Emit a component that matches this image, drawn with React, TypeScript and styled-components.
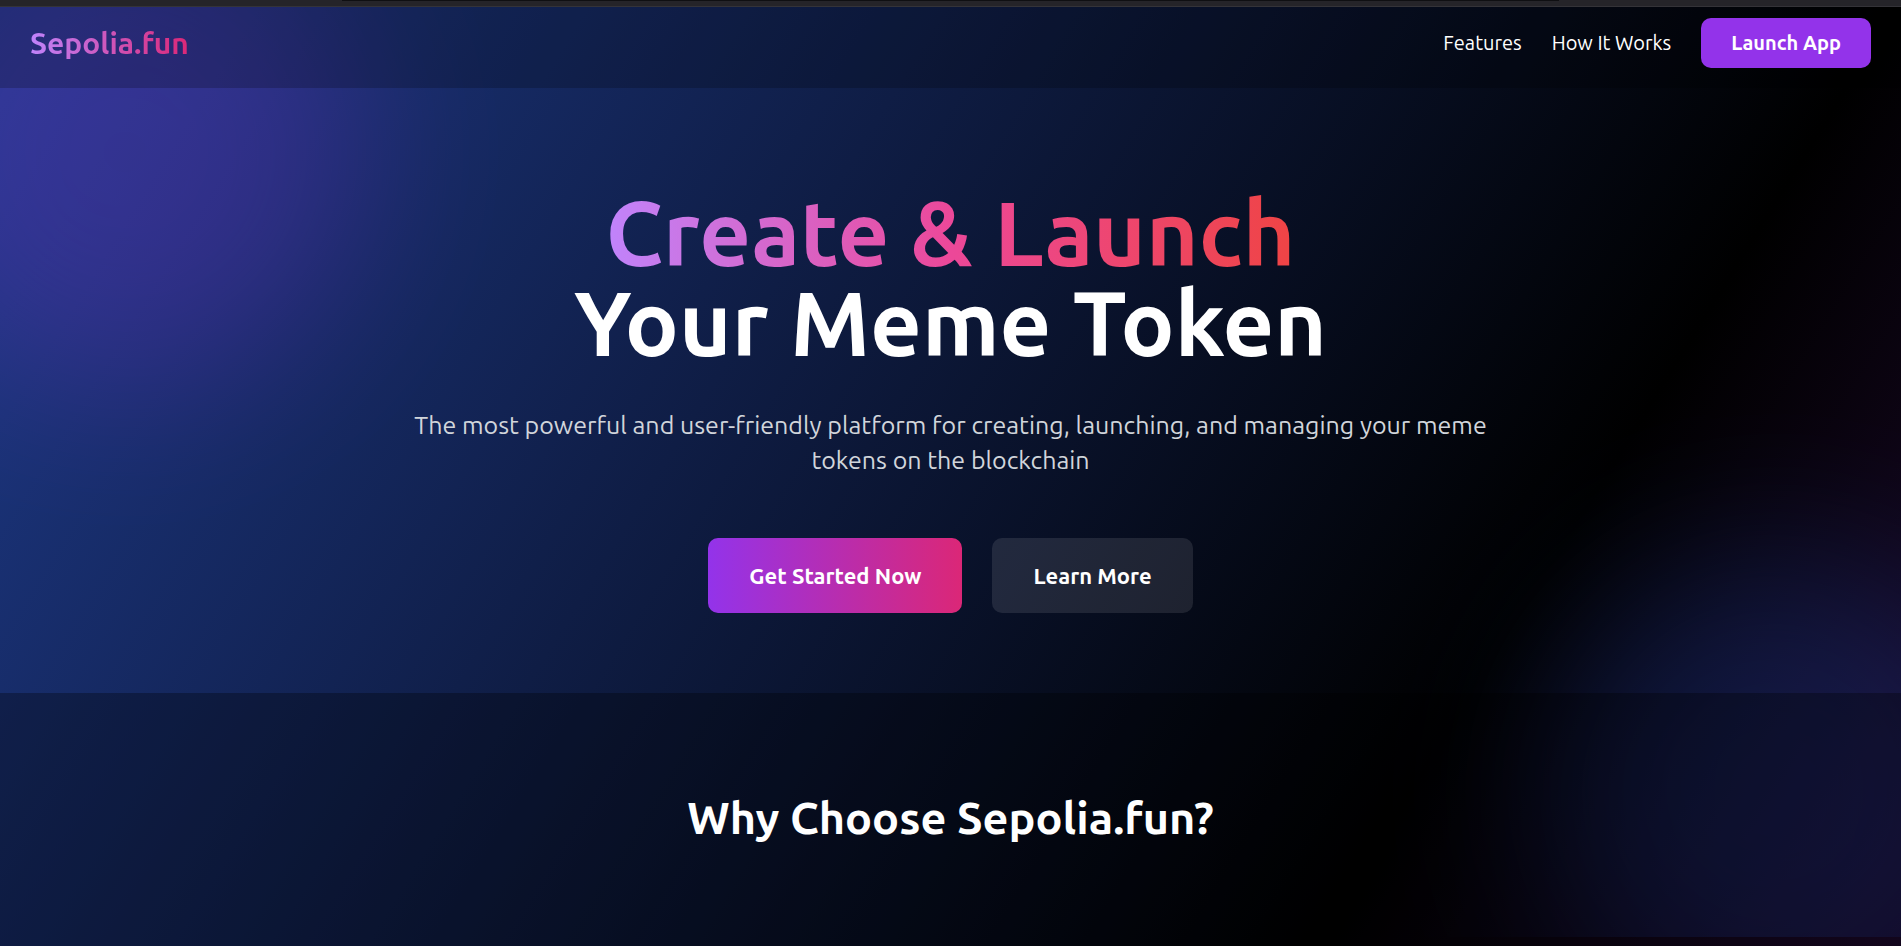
import React from "react";
import styled, { createGlobalStyle, css } from "styled-components";

const GlobalStyle = createGlobalStyle`
  *, *::before, *::after { box-sizing: border-box; }
  body { margin: 0; background: #000; }
`;

const Page = styled.div`
  position: relative;
  min-height: 100vh;
  display: flex;
  flex-direction: column;
  overflow: hidden;
  background: linear-gradient(to bottom right, #1e3a8a, #000 50%, #581c87) 0 0 / 100% 3070px no-repeat;
  color: #fff;
  font-family: Ubuntu, "Noto Sans", sans-serif;
  font-size: 20px;
  font-weight: 400;
  line-height: 30px;
`;

const WindowEdge = styled.div`
  position: relative;
  height: 7px;
  background: #252429;
  border-bottom: 1px solid #343338;
`;

const AddressBarEdge = styled.div`
  width: 64%;
  height: 1px;
  margin: 0 auto;
  background: #0f0f12;
`;

const Glow = styled.div`
  position: absolute;
  inset: 7px 0 9px;
  overflow: hidden;
  pointer-events: none;
`;

const Orb = styled.div<{ $tone: "purple" | "blue" }>`
  position: absolute;
  width: 480px;
  height: 480px;
  border-radius: 50%;
  filter: blur(80px);
  opacity: 0.2;
  ${({ $tone }) =>
    $tone === "purple"
      ? css`top: -95px; left: -115px; background: #9333ea;`
      : css`bottom: -95px; right: -115px; background: #2563eb;`}
`;

const Header = styled.header`
  position: relative;
  display: flex;
  align-items: center;
  justify-content: space-between;
  padding: 11px 30px 20px;
  background: rgba(0, 0, 0, 0.2);
`;

const Logo = styled.a`
  font-size: 30px;
  font-weight: 600;
  line-height: 40px;
  text-decoration: none;
  color: transparent;
  background: linear-gradient(to right, #c084fc, #db2777);
  background-clip: text;
  -webkit-background-clip: text;
`;

const Nav = styled.nav`
  display: flex;
  align-items: center;
  gap: 30px;
`;

const NavLink = styled.a`
  color: #fff;
  text-decoration: none;
`;

const Button = styled.button<{ $kind: "nav" | "primary" | "secondary" }>`
  border: 0;
  border-radius: 10px;
  color: #fff;
  font-family: inherit;
  font-weight: 600;
  cursor: pointer;
  ${({ $kind }) =>
    $kind === "nav"
      ? css`padding: 10px 30px; font-size: 20px; line-height: 30px; background: #9333ea;`
      : css`padding: 20px 41px; font-size: 22px; line-height: 35px;`}
  ${({ $kind }) => $kind === "primary" && css`background: linear-gradient(to right, #9333ea, #db2777);`}
  ${({ $kind }) => $kind === "secondary" && css`background: rgba(255, 255, 255, 0.1);`}
`;

const Hero = styled.section`
  position: relative;
  display: flex;
  flex-direction: column;
  align-items: center;
  padding: 100px 30px 80px;
  text-align: center;
`;

const HeroTitle = styled.h1`
  margin: 0 0 40px;
  font-size: 90px;
  font-weight: 600;
  line-height: 90px;
`;

const TitleAccent = styled.span`
  display: block;
  width: fit-content;
  margin: 0 auto;
  color: transparent;
  background: linear-gradient(to right, #c084fc, #ec4899, #ef4444);
  background-clip: text;
  -webkit-background-clip: text;
`;

const Subtitle = styled.p`
  max-width: 1120px;
  margin: 0 0 60px;
  color: #d1d5db;
  font-size: 25px;
  line-height: 35px;
`;

const Actions = styled.div`
  display: flex;
  flex-wrap: wrap;
  justify-content: center;
  gap: 30px;
`;

const Features = styled.section`
  position: relative;
  flex: 1;
  padding: 100px 30px;
  background: rgba(0, 0, 0, 0.3);
  text-align: center;
`;

const SectionTitle = styled.h2`
  margin: 0;
  font-size: 45px;
  font-weight: 600;
  line-height: 50px;
`;

export default function App() {
  return (
    <Page>
      <GlobalStyle />
      <Glow aria-hidden="true">
        <Orb $tone="purple" />
        <Orb $tone="blue" />
      </Glow>
      <WindowEdge>
        <AddressBarEdge />
      </WindowEdge>
      <Header>
        <Logo href="#">Sepolia.fun</Logo>
        <Nav>
          <NavLink href="#features">Features</NavLink>
          <NavLink href="#how-it-works">How It Works</NavLink>
          <Button $kind="nav" type="button">Launch App</Button>
        </Nav>
      </Header>
      <Hero>
        <HeroTitle>
          <TitleAccent>Create &amp; Launch</TitleAccent>
          Your Meme Token
        </HeroTitle>
        <Subtitle>
          The most powerful and user-friendly platform for creating, launching, and managing your meme tokens on the
          blockchain
        </Subtitle>
        <Actions>
          <Button $kind="primary" type="button">Get Started Now</Button>
          <Button $kind="secondary" type="button">Learn More</Button>
        </Actions>
      </Hero>
      <Features id="features">
        <SectionTitle>Why Choose Sepolia.fun?</SectionTitle>
      </Features>
    </Page>
  );
}
